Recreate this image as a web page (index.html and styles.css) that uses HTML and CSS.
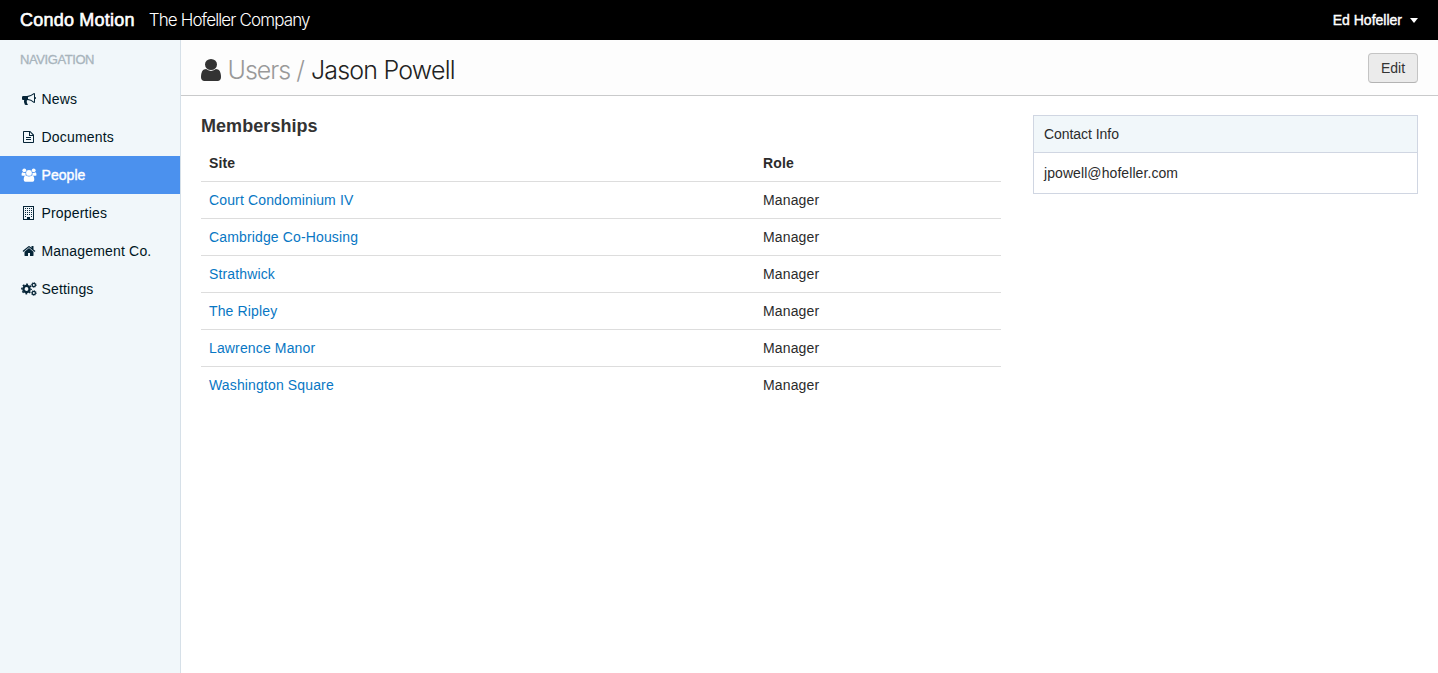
FILE: index.html
```html
<!DOCTYPE html>
<html lang="en">
<head>
<meta charset="utf-8">
<title>Jason Powell - Condo Motion</title>
<link rel="stylesheet" href="styles.css">
</head>
<body>
<header class="topbar">
  <span class="brand">Condo Motion</span>
  <span class="company">The Hofeller Company</span>
  <a class="account"><span class="account-name">Ed Hofeller</span><span class="caret"></span></a>
</header>
<div class="layout">
  <nav class="sidebar">
    <h2 class="nav-title">NAVIGATION</h2>
    <a class="nav-item"><svg class="icon" viewBox="0 0 1792 1792"><path d="M1664 640q53 0 90.500 37.500t37.500 90.500-37.500 90.500-90.500 37.500v384q0 52-38 90t-90 38q-417-347-812-380-58 19-91 66t-31 100.500 40 92.500q-20 33-23 65.500t6 58 33.500 55 48 50 61.500 50.500q-29 58-111.500 83t-168.500 11.500-132-55.500q-7-23-29.500-87.500t-32-94.500-23-89-15-101 3.500-98.500 22-110.500h-122q-66 0-113-47t-47-113v-192q0-66 47-113t113-47h480q435 0 896-384 52 0 90 38t38 90v384zm-128 604v-954q-394 302-768 343v270q377 42 768 341z"/></svg><span class="nav-label">News</span></a>
    <a class="nav-item"><svg class="icon" viewBox="0 0 14 14"><path fill-rule="evenodd" d="M1 1.800q0-.8.8-.8h6.400l3.800 3.800v7.400q0 .8-.8.800h-9.400q-.8 0-.8-.8zM2 2v10h9v-6h-4v-4zM8 2.300v2.700h2.600z"/><path d="M4 7h5v1h-5zM4 9h5v1h-5z"/></svg><span class="nav-label">Documents</span></a>
    <a class="nav-item active"><svg class="icon wide" viewBox="0 0 16 14"><circle cx="3.300" cy="2.300" r="1.900"/><circle cx="12.700" cy="2.300" r="1.900"/><path d="M.5 7.300q0-3 1.100-3 1.500 1 3 .4-.4 1.800.5 3h-3.500q-1 0-1.100-.4zM15.500 7.300q0-3-1.100-3-1.500 1-3 .4.400 1.800-.5 3h3.500q1 0 1.100-.4z"/><circle cx="8" cy="4.900" r="2.900"/><path d="M2.700 11.700q0-4.200 2.400-4.200 2.900 2 5.800 0 2.400 0 2.400 4.200 0 2.100-1.700 2.100h-7.200q-1.700 0-1.700-2.100z"/></svg><span class="nav-label">People</span></a>
    <a class="nav-item"><svg class="icon" viewBox="0 0 14 14" shape-rendering="crispEdges"><path fill-rule="evenodd" d="M1 0h11v14h-11zM2 1v12h3v-2h3v2h3v-12z"/><path d="M3 2h1v1h-1zm2 0h1v1h-1zm2 0h1v1h-1zm2 0h1v1h-1zM3 4h1v1h-1zm2 0h1v1h-1zm2 0h1v1h-1zm2 0h1v1h-1zM3 6h1v1h-1zm2 0h1v1h-1zm2 0h1v1h-1zm2 0h1v1h-1zM3 8h1v1h-1zm2 0h1v1h-1zm2 0h1v1h-1zm2 0h1v1h-1zM3 10h1v1h-1zm6 0h1v1h-1z"/></svg><span class="nav-label">Properties</span></a>
    <a class="nav-item"><svg class="icon" viewBox="0 0 1792 1792"><path d="M1472 992v480q0 26-19 45t-45 19h-384v-384h-256v384h-384q-26 0-45-19t-19-45v-480q0-1 .5-3t.5-3l575-474 575 474q1 2 1 6zm223-69l-62 74q-8 9-21 11h-3q-13 0-21-7l-692-577-692 577q-12 8-24 7-13-2-21-11l-62-74q-8-10-7-23.500t11-21.500l719-599q32-26 76-26t76 26l244 204v-195q0-14 9-23t23-9h192q14 0 23 9t9 23v408l219 182q10 8 11 21.500t-7 23.500z"/></svg><span class="nav-label">Management Co.</span></a>
    <a class="nav-item"><svg class="icon wide" viewBox="0 0 16 14"><g fill="none" stroke="currentColor"><circle cx="5.500" cy="7" r="3.100" stroke-width="2.400"/><circle cx="5.500" cy="7" r="4.700" stroke-width="1.400" stroke-dasharray="1.850 1.840" stroke-dashoffset=".9"/><circle cx="12.800" cy="3" r="1.650" stroke-width="1.300"/><circle cx="12.800" cy="3" r="2.500" stroke-width=".8" stroke-dasharray="1 .963"/><circle cx="12.800" cy="11" r="1.650" stroke-width="1.300"/><circle cx="12.800" cy="11" r="2.500" stroke-width=".8" stroke-dasharray="1 .963"/></g></svg><span class="nav-label">Settings</span></a>
  </nav>
  <main class="main">
    <div class="page-head">
      <svg class="user-icon" viewBox="256 128 1280 1536" preserveAspectRatio="none"><path d="M1536 1399q0 109-62.500 187t-150.500 78h-854q-88 0-150.500-78t-62.500-187q0-85 8.500-160.500t31.500-152 58.500-131 94-89 134.500-34.500q131 128 313 128t313-128q76 0 134.500 34.500t94 89 58.500 131 31.500 152 8.500 160.500zm-256-887q0 159-112.500 271.500t-271.500 112.500-271.500-112.500-112.500-271.500 112.500-271.500 271.500-112.500 271.500 112.500 112.500 271.500z"/></svg>
      <h1 class="title"><span class="crumb">Users /</span><span class="person">Jason Powell</span></h1>
      <button class="edit"><span class="edit-label">Edit</span></button>
    </div>
    <div class="content">
      <section class="memberships">
        <h3 class="section-title"><span class="section-label">Memberships</span></h3>
        <table class="table">
          <thead><tr><th class="site">Site</th><th>Role</th></tr></thead>
          <tbody>
            <tr><td><a>Court Condominium IV</a></td><td>Manager</td></tr>
            <tr><td><a>Cambridge Co-Housing</a></td><td>Manager</td></tr>
            <tr><td><a>Strathwick</a></td><td>Manager</td></tr>
            <tr><td><a>The Ripley</a></td><td>Manager</td></tr>
            <tr><td><a>Lawrence Manor</a></td><td>Manager</td></tr>
            <tr><td><a>Washington Square</a></td><td>Manager</td></tr>
          </tbody>
        </table>
      </section>
      <aside class="panel">
        <div class="panel-head">Contact Info</div>
        <div class="panel-body">jpowell@hofeller.com</div>
      </aside>
    </div>
  </main>
</div>
</body>
</html>
```
FILE: styles.css
```css
* { box-sizing: border-box; }
body {
  margin: 0;
  height: 673px;
  display: flex;
  flex-direction: column;
  overflow: hidden;
  background: #fff;
  color: #2b2b2b;
  font: 14px/20px "Liberation Sans", Arial, sans-serif;
  letter-spacing: 0.14px;
}
svg { display: block; fill: currentColor; }
.topbar {
  display: flex;
  align-items: center;
  flex: 0 0 40px;
  padding: 0 20px;
  background: #000;
  color: #fff;
}
.brand { font-size: 18px; -webkit-text-stroke: 0.6px #fff; letter-spacing: 0.22px; }
.company { margin-left: 14px; font: 300 17px/20px Inter, sans-serif; letter-spacing: -0.87px; }
.account { display: flex; align-items: center; margin-left: auto; }
.account-name { -webkit-text-stroke: 0.4px #fff; letter-spacing: 0; }
.caret {
  margin-left: 8px;
  border: 4.5px solid transparent;
  border-top: 5px solid #fff;
  border-bottom: 0;
}
.layout { display: flex; flex: 1; }
.sidebar {
  flex: 0 0 181px;
  background: #f1f7fa;
  border-right: 1px solid #d6e0e8;
}
.nav-title {
  margin: 0;
  height: 40px;
  padding-left: 20px;
  font-size: 13px;
  font-weight: 400;
  line-height: 39px;
  letter-spacing: -0.42px;
  color: #a8b4bc;
  -webkit-text-stroke: 0.3px #a8b4bc;
}
.nav-item {
  display: flex;
  align-items: center;
  height: 38px;
  padding-left: 22px;
  color: #062537;
}
.icon { width: 14px; height: 14px; }
.icon.wide { width: 16px; margin: 0 -1px; }
.nav-label { margin-left: 5.5px; color: #001523; letter-spacing: 0.18px; }
.active { background: #4b91ee; color: #fff; }
.active .nav-label { color: #fff; -webkit-text-stroke: 0.4px #fff; letter-spacing: 0.05px; }
.main { flex: 1; }
.page-head {
  display: flex;
  align-items: center;
  height: 56px;
  padding: 0 20px;
  background: #fdfdfd;
  border-bottom: 1px solid #c9cacb;
}
.user-icon { width: 20px; height: 22px; margin-top: 4px; color: #333; }
.title { margin: 5px 0 0 6.5px; font: 300 25px/30px Inter, sans-serif; letter-spacing: -1px; }
.crumb { color: #999; }
.person { margin-left: 7px; color: #222; letter-spacing: -0.8px; }
.edit {
  width: 50px;
  height: 30px;
  margin-left: auto;
  padding: 0;
  border: 1px solid #c4c4c4;
  border-bottom-color: #b3b3b3;
  border-radius: 4px;
  background: #ebebeb;
  color: #333;
  font: inherit;
}
.content { display: flex; justify-content: space-between; padding: 19px 20px; }
.memberships { width: 800px; padding-top: 1px; }
.section-title { margin: 0 0 9px; font-size: 18px; line-height: 20px; color: #333; letter-spacing: 0.06px; }
.table { width: 100%; border-collapse: collapse; table-layout: fixed; }
.table th, .table td { height: 37px; padding: 8px; text-align: left; line-height: 20px; }
.table th { height: 36px; }
.table td { border-top: 1px solid #ddd; }
.site { width: 554px; }
.table a { color: #0877c4; }
.panel { width: 385px; height: 79px; border: 1px solid #d0d6e2; }
.panel-head {
  height: 37px;
  padding: 8px 10px;
  background: #f1f7fa;
  border-bottom: 1px solid #d0d6e2;
  letter-spacing: -0.05px;
}
.panel-body { padding: 10px; letter-spacing: 0.08px; }
```
